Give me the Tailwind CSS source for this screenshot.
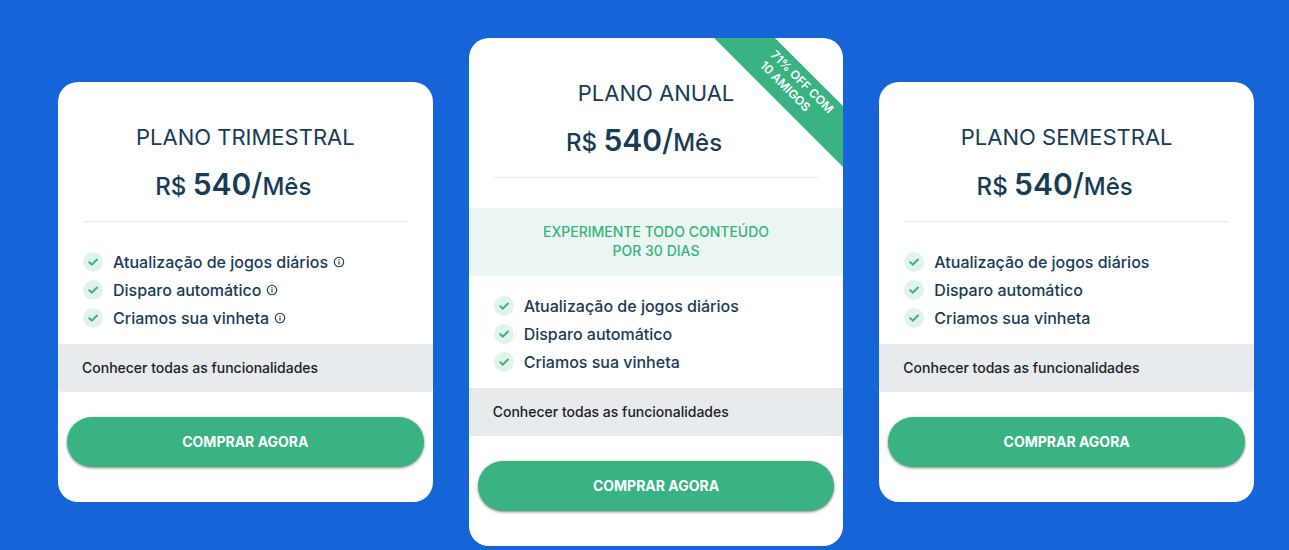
<!DOCTYPE html>
<html lang="pt-BR">
<head>
<meta charset="utf-8">
<meta name="viewport" content="width=device-width, initial-scale=1">
<title>Planos</title>
<script src="https://cdn.jsdelivr.net/npm/@tailwindcss/browser@4"></script>
</head>
<body class="bg-[#1565d8] font-['Inter','Liberation_Sans',sans-serif] text-[#183b56]">
<svg class="hidden" aria-hidden="true">
  <symbol id="check" viewBox="0 0 20 20"><circle cx="10" cy="10" r="10" fill="#e0f4eb"/><path d="M5.6 9.6 8.8 12.7 14.5 7" fill="none" stroke="#36b37e" stroke-width="2"/></symbol>
  <symbol id="info" viewBox="0 0 12 12"><circle cx="6" cy="6" r="4.7" fill="none" stroke="currentColor" stroke-width="1.1"/><path d="M6 5.3V8.6M6 3.3V4.4" stroke="currentColor" stroke-width="1.1"/></symbol>
</svg>
<main class="flex flex-wrap items-center gap-9 pt-[38px] pr-[35px] pb-1 pl-[58px] md:flex-nowrap">

  <article class="min-w-0 flex-1 overflow-hidden rounded-[20px] bg-white pt-10 pb-[35px]">
    <h2 class="text-center text-[22px] leading-[30px]">PLANO TRIMESTRAL</h2>
    <p class="mt-2 pr-6 text-center text-[24px] leading-[48px] font-medium">R$ <span class="text-[30px]"><span class="font-semibold">540</span>/</span>Mês</p>
    <hr class="mx-[25px] mt-[10px] border-[#e5eaf4]">
    <ul class="mt-[26px] px-[25px] pb-3 text-[16px] leading-[28px] font-medium">
      <li class="flex items-center gap-[10px]"><svg class="size-5 shrink-0"><use href="#check"/></svg><span class="flex items-center gap-[5px]">Atualização de jogos diários <svg class="size-3"><use href="#info"/></svg></span></li>
      <li class="flex items-center gap-[10px]"><svg class="size-5 shrink-0"><use href="#check"/></svg><span class="flex items-center gap-[5px]">Disparo automático <svg class="size-3"><use href="#info"/></svg></span></li>
      <li class="flex items-center gap-[10px]"><svg class="size-5 shrink-0"><use href="#check"/></svg><span class="flex items-center gap-[5px]">Criamos sua vinheta <svg class="size-3"><use href="#info"/></svg></span></li>
    </ul>
    <button type="button" class="block w-full rounded-b bg-[#e7ebee] px-6 text-left text-[14px] leading-[48px] font-medium text-[#212121]">Conhecer todas as funcionalidades</button>
    <div class="mt-[25px] px-[9px]"><button type="button" class="block w-full rounded-full bg-[#38b381] text-[14px] leading-[50px] font-bold text-white shadow-[0_1px_3px_rgba(0,0,0,0.5)]">COMPRAR AGORA</button></div>
  </article>

  <article class="relative min-w-0 flex-1 overflow-hidden rounded-[20px] bg-white pt-10 pb-[35px]">
    <div class="absolute top-[29px] right-[-62px] h-[43px] w-[220px] rotate-45 bg-[#38b381] pt-1 pl-[69px] text-[12px] leading-[15px] font-semibold text-white">71% OFF COM<br>10 AMIGOS</div>
    <h2 class="text-center text-[22px] leading-[30px]">PLANO ANUAL</h2>
    <p class="mt-2 pr-6 text-center text-[24px] leading-[48px] font-medium">R$ <span class="text-[30px]"><span class="font-semibold">540</span>/</span>Mês</p>
    <hr class="mx-[25px] mt-[10px] border-[#e5eaf4]">
    <p class="mt-[30px] bg-[#ebf6f2] pt-[14px] pb-4 text-center text-[14px] leading-[19px] font-medium text-[#36b37e]">EXPERIMENTE TODO CONTEÚDO<br>POR 30 DIAS</p>
    <ul class="mt-4 px-[25px] pb-3 text-[16px] leading-[28px] font-medium">
      <li class="flex items-center gap-[10px]"><svg class="size-5 shrink-0"><use href="#check"/></svg>Atualização de jogos diários</li>
      <li class="flex items-center gap-[10px]"><svg class="size-5 shrink-0"><use href="#check"/></svg>Disparo automático</li>
      <li class="flex items-center gap-[10px]"><svg class="size-5 shrink-0"><use href="#check"/></svg>Criamos sua vinheta</li>
    </ul>
    <button type="button" class="block w-full rounded-b bg-[#e7ebee] px-6 text-left text-[14px] leading-[48px] font-medium text-[#212121]">Conhecer todas as funcionalidades</button>
    <div class="mt-[25px] px-[9px]"><button type="button" class="block w-full rounded-full bg-[#38b381] text-[14px] leading-[50px] font-bold text-white shadow-[0_1px_3px_rgba(0,0,0,0.5)]">COMPRAR AGORA</button></div>
  </article>

  <article class="min-w-0 flex-1 overflow-hidden rounded-[20px] bg-white pt-10 pb-[35px]">
    <h2 class="text-center text-[22px] leading-[30px]">PLANO SEMESTRAL</h2>
    <p class="mt-2 pr-6 text-center text-[24px] leading-[48px] font-medium">R$ <span class="text-[30px]"><span class="font-semibold">540</span>/</span>Mês</p>
    <hr class="mx-[25px] mt-[10px] border-[#e5eaf4]">
    <ul class="mt-[26px] px-[25px] pb-3 text-[16px] leading-[28px] font-medium">
      <li class="flex items-center gap-[10px]"><svg class="size-5 shrink-0"><use href="#check"/></svg>Atualização de jogos diários</li>
      <li class="flex items-center gap-[10px]"><svg class="size-5 shrink-0"><use href="#check"/></svg>Disparo automático</li>
      <li class="flex items-center gap-[10px]"><svg class="size-5 shrink-0"><use href="#check"/></svg>Criamos sua vinheta</li>
    </ul>
    <button type="button" class="block w-full rounded-b bg-[#e7ebee] px-6 text-left text-[14px] leading-[48px] font-medium text-[#212121]">Conhecer todas as funcionalidades</button>
    <div class="mt-[25px] px-[9px]"><button type="button" class="block w-full rounded-full bg-[#38b381] text-[14px] leading-[50px] font-bold text-white shadow-[0_1px_3px_rgba(0,0,0,0.5)]">COMPRAR AGORA</button></div>
  </article>
</main>
</body>
</html>
